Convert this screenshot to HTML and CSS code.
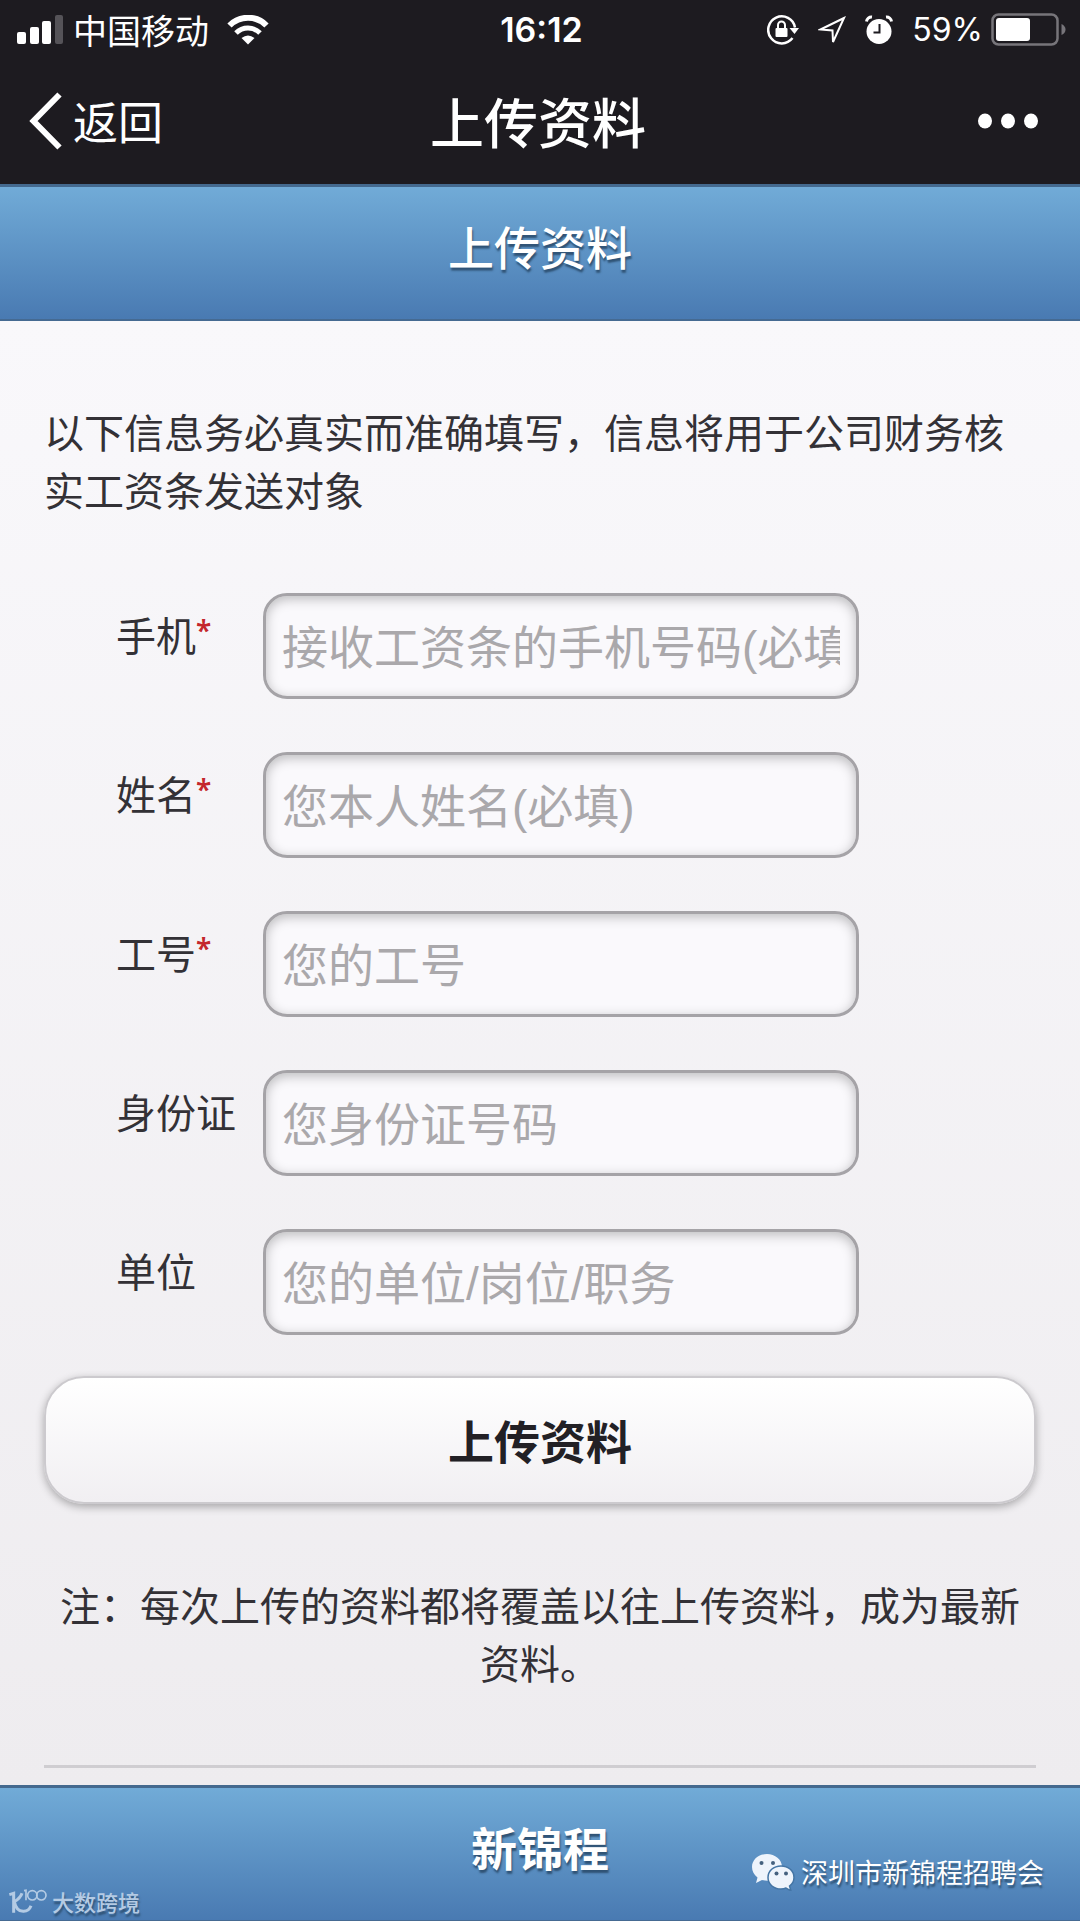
FILE: index.html
```
<!DOCTYPE html>
<html lang="zh-CN">
<head>
    <meta charset="UTF-8">
    <meta name="viewport" content="width=device-width, initial-scale=1.0">
    <title>上传资料</title>
    <link rel="stylesheet" href="styles.css">
</head>
<body>

    <!-- 状态栏和导航 -->
    <div class="top">
        <div class="status">
            <div class="status-left">
                <svg width="46" height="30" viewBox="0 0 46 30" fill="#fff">
                    <rect x="0" y="17" width="9" height="12" rx="2"/>
                    <rect x="13" y="12" width="9" height="17" rx="2"/>
                    <rect x="25" y="6" width="9" height="23" rx="2"/>
                    <rect x="38" y="0" width="8" height="29" rx="2" fill="#555358"/>
                </svg>
                <span class="carrier">中国移动</span>
                <svg width="42" height="30" viewBox="0 0 42 30" fill="none" stroke="#fff">
                    <path d="M2.500 10.500a26 26 0 0 1 37 0" stroke-width="6"/>
                    <path d="M9 18a17 17 0 0 1 24 0" stroke-width="5"/>
                    <path d="M21 29.500l-6.500-6.500q6.500-5 13 0z" fill="#fff" stroke="none"/>
                </svg>
            </div>
            <span class="clock">16:12</span>
            <div class="status-right">
                <svg width="32" height="30" viewBox="0 0 32 30">
                    <path d="M25.500 23A13.500 13.500 0 1 1 28 12.500" fill="none" stroke="#fff" stroke-width="2.500"/>
                    <path d="M22.500 13h9.500l-4.500 6z" fill="#fff"/>
                    <rect x="8.500" y="13" width="12" height="9" rx="1" fill="#fff"/>
                    <path d="M11 13v-3a3.500 3.500 0 0 1 7 0v3" fill="none" stroke="#fff" stroke-width="2"/>
                </svg>
                <svg width="28" height="30" viewBox="0 0 28 30" fill="none" stroke="#fff" stroke-width="2">
                    <path d="M26 3L2.500 14.500l12 1 .500 11.500z"/>
                </svg>
                <svg width="28" height="30" viewBox="0 0 28 30">
                    <circle cx="14" cy="16.500" r="12.500" fill="#fff"/>
                    <path d="M1.500 6.500a5 5 0 0 1 5.500-4.500M26.500 6.500a5 5 0 0 0-5.500-4.500" fill="none" stroke="#fff" stroke-width="3"/>
                    <path d="M14.500 9v8.500H8.500" fill="none" stroke="#1d1b20" stroke-width="2"/>
                </svg>
                <span class="percent">59%</span>
                <svg width="75" height="34" viewBox="0 0 75 34">
                    <rect x="1.500" y="1.500" width="65" height="30" rx="6" fill="none" stroke="#77757a" stroke-width="2.500"/>
                    <rect x="5" y="5" width="34" height="23" rx="3" fill="#fff"/>
                    <path d="M70.500 11q4 2 4 5.500t-4 5.500z" fill="#77757a"/>
                </svg>
            </div>
        </div>
        <div class="nav">
            <a class="back" href="#">
                <svg width="34" height="58" viewBox="0 0 34 58" fill="none" stroke="#fff" stroke-width="6">
                    <path d="M30.500 2.500L4.500 29l26 26.500"/>
                </svg>
                返回
            </a>
            <h1>上传资料</h1>
            <button class="more" type="button" aria-label="更多">
                <svg width="62" height="16" viewBox="0 0 62 16" fill="#fff">
                    <ellipse cx="8" cy="8" rx="7" ry="7.500"/>
                    <ellipse cx="31" cy="8" rx="7" ry="7.500"/>
                    <ellipse cx="54" cy="8" rx="7" ry="7.500"/>
                </svg>
            </button>
        </div>
    </div>

    <header class="bar">
        <h2>上传资料</h2>
    </header>

    <!-- 表单 -->
    <main class="content">
        <p class="tip">以下信息务必真实而准确填写，信息将用于公司财务核实工资条发送对象</p>
        <form>
            <div class="row">
                <label for="phone">手机<sup>*</sup></label>
                <input type="tel" id="phone" placeholder="接收工资条的手机号码(必填)">
            </div>
            <div class="row">
                <label for="name">姓名<sup>*</sup></label>
                <input type="text" id="name" placeholder="您本人姓名(必填)">
            </div>
            <div class="row">
                <label for="number">工号<sup>*</sup></label>
                <input type="text" id="number" placeholder="您的工号">
            </div>
            <div class="row">
                <label for="idcard">身份证</label>
                <input type="text" id="idcard" placeholder="您身份证号码">
            </div>
            <div class="row">
                <label for="company">单位</label>
                <input type="text" id="company" placeholder="您的单位/岗位/职务">
            </div>
            <button class="submit" type="button">上传资料</button>
        </form>
        <p class="note">注：每次上传的资料都将覆盖以往上传资料，成为最新资料。</p>
        <hr>
    </main>

    <footer class="bar footer">
        <h2>新锦程</h2>
        <div class="source">
            <svg width="38" height="25" viewBox="0 0 114 75" fill="none" stroke="#b4cbe4">
                <path d="M1 17l13-4v58" stroke-width="9"/>
                <path d="M39 13Q34 28 16 38q6 30 28 29 16-1 22-17" stroke-width="9"/>
                <path d="M45 5l6-1v30" stroke-width="5"/>
                <circle cx="70" cy="19" r="14" stroke-width="5"/>
                <circle cx="97" cy="19" r="14" stroke-width="5"/>
            </svg>
            <span>大数跨境</span>
        </div>
        <div class="account">
            <svg width="43" height="38" viewBox="0 0 43 38" fill="#eef4fc">
                <path d="M15 1C6.500 1 0 6.500 0 14c0 4 2 8 5.500 10.500L4 30l6-3q6 1.500 10.500 0C27 25 30 20 30 14 30 6.500 23 1 15 1z"/>
                <path d="M29 13c-7.500 0-13 5-13 11.500S21.500 36 29 36q3 0 5-1l5 3-1.500-5c3-2 4.500-5 4.500-8.500C42 18 36.500 13 29 13z" stroke="#4475a5" stroke-width="1.500"/>
                <g fill="#45617f">
                    <circle cx="9.500" cy="10" r="2"/>
                    <circle cx="21" cy="10" r="2"/>
                    <circle cx="24.500" cy="20.500" r="2"/>
                    <circle cx="34" cy="20.500" r="2"/>
                </g>
            </svg>
            <span>深圳市新锦程招聘会</span>
        </div>
    </footer>

</body>
</html>
```
FILE: styles.css
```
* {
    box-sizing: border-box;
}
body {
    margin: 0;
    min-height: 100vh;
    display: flex;
    flex-direction: column;
    font-family: "Noto Sans CJK SC", sans-serif;
    font-size: 40px;
    line-height: 58px;
    color: #333136;
    background: #f1eff2;
}
h1, h2, p {
    margin: 0;
}
svg {
    display: block;
    flex: none;
}
.top {
    background: #1d1b20;
    color: #fff;
}
.status {
    display: grid;
    grid-template-columns: 1fr auto 1fr;
    align-items: center;
    height: 58px;
    padding: 0 14px 0 17px;
}
.status-left, .status-right {
    display: flex;
    align-items: center;
}
.carrier {
    margin: 0 18px 0 10px;
    font-size: 34px;
}
.clock {
    font-family: Inter, sans-serif;
    font-size: 34px;
    font-weight: 600;
    line-height: 60px;
}
.status-right {
    justify-content: flex-end;
    gap: 19px;
}
.percent {
    margin-right: -11px;
    font-family: Inter, sans-serif;
    font-size: 32px;
}
.nav {
    display: grid;
    grid-template-columns: 1fr auto 1fr;
    align-items: center;
    height: 126px;
    padding: 0 33px 0 29px;
}
.back {
    display: flex;
    align-items: center;
    gap: 10px;
    color: #fff;
    font-size: 45px;
    text-decoration: none;
}
.nav h1 {
    font-size: 54px;
    font-weight: 500;
}
.more {
    justify-self: end;
    padding: 0 8px;
    border: none;
    background: none;
}
.bar {
    position: relative;
    height: 137px;
    padding-top: 29px;
    border-top: 3px solid #44698e;
    border-bottom: 2px solid #456a92;
    background: linear-gradient(#71abd7, #497ab2);
    color: #fff;
    text-align: center;
    text-shadow: 1px 3px 2px #2f5274;
}
.bar h2 {
    font-size: 46px;
    font-weight: 500;
}
.content {
    flex: 1;
    padding: 81px 44px 0;
    background: linear-gradient(#f9f8fb, #eeecef);
}
.tip {
    margin-bottom: 75px;
}
.row {
    display: grid;
    grid-template-columns: 147px 596px;
    align-items: start;
    margin: 0 0 53px 72px;
}
.row label {
    padding-top: 12px;
}
sup {
    color: #c4272c;
    font-family: "Noto Sans", sans-serif;
    font-size: 28px;
    font-weight: 600;
    line-height: 0;
    vertical-align: 10px;
}
input {
    width: 100%;
    height: 106px;
    padding: 3px 16px 0;
    border: 3px solid #a5a3a7;
    border-radius: 24px;
    background: #faf9fc;
    box-shadow: inset 0 3px 12px rgba(0, 0, 0, 0.25);
    font-family: "Liberation Sans", "Noto Sans CJK SC", sans-serif;
    font-size: 46px;
}
input::placeholder {
    color: #aaa8ab;
}
.submit {
    display: block;
    width: 100%;
    height: 128px;
    margin-top: -12px;
    padding-bottom: 4px;
    border: 2px solid #cccace;
    border-radius: 40px;
    background: linear-gradient(#fff, #f1eff2);
    box-shadow: 0 3px 8px rgba(0, 0, 0, 0.3);
    color: #222025;
    font-family: inherit;
    font-size: 46px;
    font-weight: 600;
}
.note {
    margin-top: 71px;
    text-align: center;
}
hr {
    height: 3px;
    margin: 74px 0 17px;
    border: none;
    background: #cfcdd1;
}
.footer h2 {
    font-weight: 600;
}
.source, .account {
    position: absolute;
    display: flex;
    align-items: center;
}
.source {
    left: 9px;
    bottom: 3px;
    gap: 5px;
    color: #b4cbe4;
    font-size: 22px;
    font-weight: 500;
    line-height: 32px;
}
.account {
    right: 36px;
    bottom: 28px;
    gap: 6px;
    font-size: 27px;
    line-height: 40px;
}
```
